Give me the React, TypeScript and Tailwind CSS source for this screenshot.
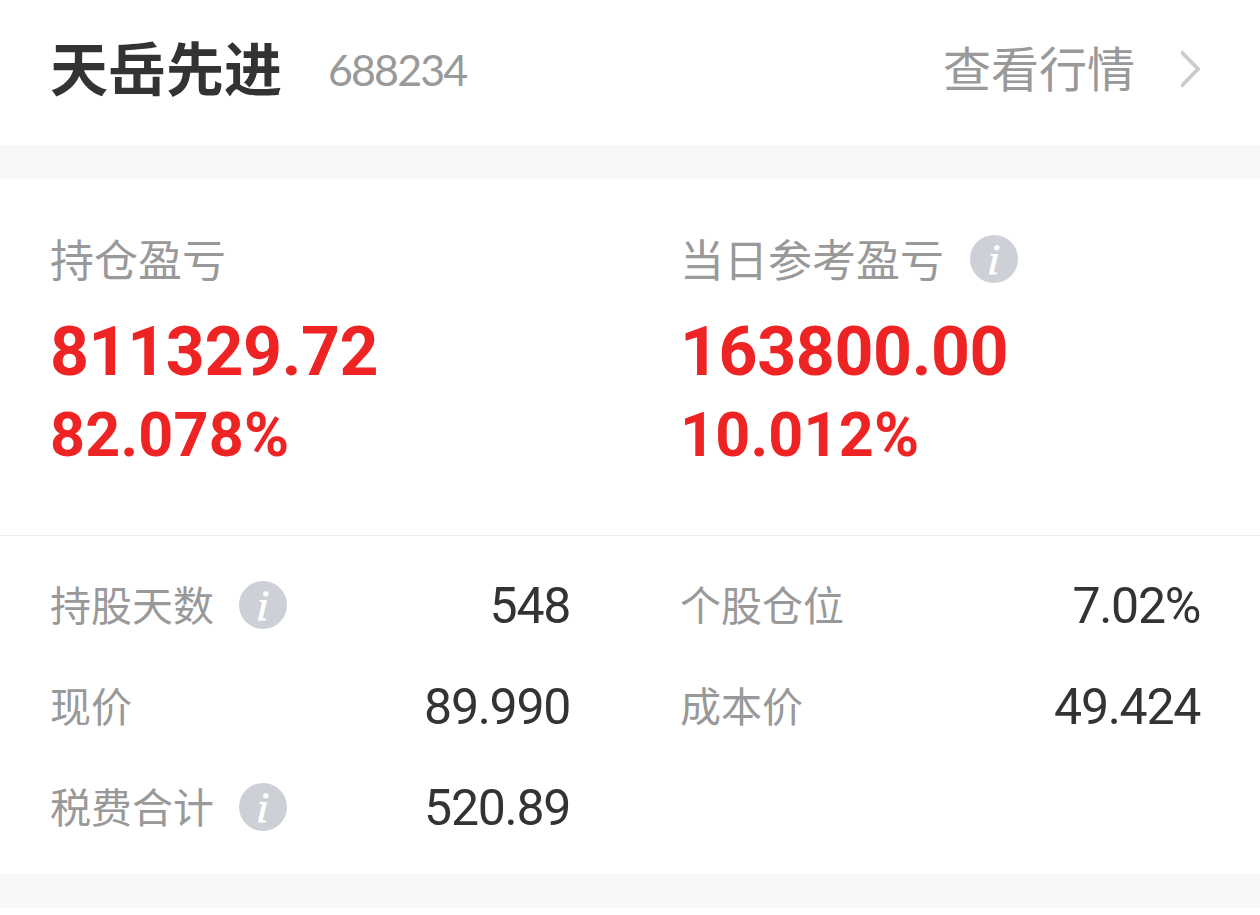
type Detail = {
  label: string;
  value: string;
  info?: boolean;
};

const DETAILS: Detail[] = [
  { label: "持股天数", value: "548", info: true },
  { label: "个股仓位", value: "7.02%" },
  { label: "现价", value: "89.990" },
  { label: "成本价", value: "49.424" },
  { label: "税费合计", value: "520.89", info: true },
];

export default function App() {
  return (
    <main className="h-[915px] w-[1260px] overflow-hidden bg-white font-['Noto_Sans_CJK_SC',sans-serif] text-[#999999]">
      <header className="flex h-[145px] items-center justify-between pr-[60px] pb-[7px] pl-[50px]">
        <div className="flex items-center">
          <h1 className="pb-1.5 text-[58px] leading-none font-bold text-[#333333]">
            天岳先进
          </h1>
          <span className="ml-[46px] font-['Lato',sans-serif] text-[43px] leading-none tracking-[-1.9px]">
            688234
          </span>
        </div>
        <a href="#quote" className="flex items-center">
          <span className="pb-1.5 text-[48px] leading-none">查看行情</span>
          <Chevron />
        </a>
      </header>

      <div className="h-[34px] bg-[#f7f7f7]" />

      <section className="grid h-[357px] grid-cols-2 border-b border-[#eeeeee] pt-[52px]">
        <Profit label="持仓盈亏" amount="811329.72" percent="82.078%" />
        <Profit
          label="当日参考盈亏"
          amount="163800.00"
          percent="10.012%"
          info
        />
      </section>

      <dl className="grid h-[338px] auto-rows-[101px] grid-cols-2 pt-[18px]">
        {DETAILS.map((d) => (
          <div
            key={d.label}
            className="flex items-center justify-between pr-[60px] pl-[50px]"
          >
            <dt className="flex items-center gap-[25px] text-[41px] leading-none">
              <span className="pb-0.5">{d.label}</span>
              {d.info && <InfoIcon />}
            </dt>
            <dd className="pt-0.5 font-['Roboto',sans-serif] text-[50px] leading-none tracking-[-1.3px] text-[#333333]">
              {d.value}
            </dd>
          </div>
        ))}
      </dl>

      <div className="h-[34px] bg-[#f7f7f7]" />
    </main>
  );
}

function Profit({
  label,
  amount,
  percent,
  info,
}: {
  label: string;
  amount: string;
  percent: string;
  info?: boolean;
}) {
  return (
    <div className="pl-[50px]">
      <div className="flex h-[56px] items-center gap-[26px] text-[44px] leading-none">
        <span className="pb-0.5">{label}</span>
        {info && <InfoIcon />}
      </div>
      <div className="mt-[22px] font-['Roboto',sans-serif] font-bold text-[#ee2424]">
        <div className="text-[68px] leading-[86px] tracking-[-0.4px]">
          {amount}
        </div>
        <div className="text-[61px] leading-[80px] tracking-[0.2px]">
          {percent}
        </div>
      </div>
    </div>
  );
}

function InfoIcon() {
  return (
    <svg className="size-12 shrink-0" viewBox="0 0 48 48">
      <circle cx="24" cy="24" r="24" fill="#cdd0d6" />
      <text
        x="25"
        y="38.6"
        textAnchor="middle"
        fill="#ffffff"
        stroke="#ffffff"
        strokeWidth="0.8"
        transform="skewX(-3)"
        className="font-['Liberation_Serif',serif] text-[43px] italic"
      >
        i
      </text>
    </svg>
  );
}

function Chevron() {
  return (
    <svg
      className="ml-[46px] h-[38px] w-[19px]"
      viewBox="0 0 19 38"
      fill="none"
      stroke="#cccccc"
      strokeWidth="3.8"
    >
      <path d="M0 1.5L17 19L0 36.5" />
    </svg>
  );
}
